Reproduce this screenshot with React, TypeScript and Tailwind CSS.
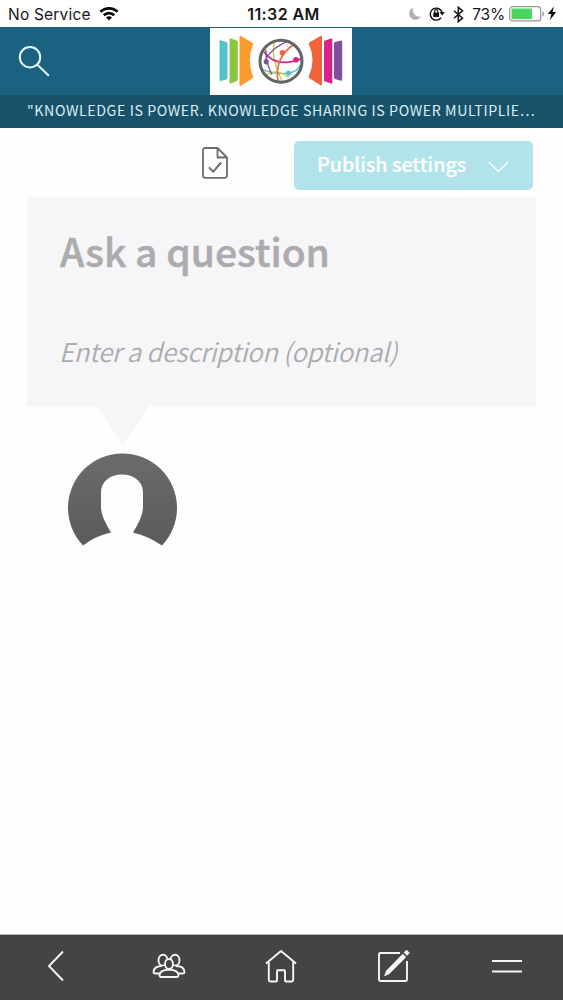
import type { ReactNode } from "react"

const sourceFont = "font-['Noto_Sans_CJK_SC','Noto_Sans',sans-serif]"

function StatusBar() {
  return (
    <div className="grid h-[27px] grid-cols-3 items-center bg-white pt-0.5 pr-[6px] pl-[8px] text-[15.5px] leading-none text-[#161616]">
      <div className="flex items-center gap-2 tracking-[0.2px] whitespace-nowrap">
        <span>No Service</span>
        <svg className="-mt-0.5" width="20" height="15" viewBox="0 0 20 15" fill="none" stroke="#080808" strokeWidth="2.7" aria-hidden>
          <path d="M1.4 5.8a12.3 12.3 0 0 1 17.2 0" />
          <path d="M4.8 9.3a7.4 7.4 0 0 1 10.4 0" />
          <path d="M7 11.6a4.2 4.2 0 0 1 6 0l-3 2.9Z" fill="#080808" stroke="none" />
        </svg>
      </div>
      <div className="-mt-0.5 ml-0.5 text-center text-[16px] font-semibold tracking-[0.4px] whitespace-nowrap">
        11:32 AM
      </div>
      <div className="flex items-center justify-end whitespace-nowrap">
        <svg className="-mt-0.5" width="14" height="14" viewBox="0 0 14 14" aria-hidden>
          <path d="M5 .8A6.3 6.3 0 1 0 13.2 9.3C9 10.8 4 7.5 5 .8Z" fill="#b0b0b3" />
        </svg>
        <svg className="-mt-0.5 ml-[7px]" width="16" height="15" viewBox="0 0 16 15" aria-hidden>
          <path d="M12.2 11.6A6 6 0 1 1 13 6.2" fill="none" stroke="#111" strokeWidth="1.4" />
          <path d="M10.6 6h5.2l-2.6 3.4Z" fill="#111" />
          <rect x="4.3" y="6.6" width="5.8" height="4.4" rx=".5" fill="#111" />
          <path d="M5.6 7V5.2a1.6 1.6 0 0 1 3.2 0V7" fill="none" stroke="#111" strokeWidth="1.1" />
        </svg>
        <svg className="-mt-px ml-2" width="11" height="17" viewBox="0 0 11 17" aria-hidden>
          <path d="m1 4.7 8.5 7.6-4.2 3.4V1.3l4.2 3.4L1 12.3" fill="none" stroke="#111" strokeWidth="1.5" />
        </svg>
        <span className="ml-2 tracking-[-0.2px]">73%</span>
        <svg className="-mt-0.5 ml-1" width="36" height="16" viewBox="0 0 36 16" aria-hidden>
          <rect x=".7" y=".7" width="31" height="14.2" rx="3" fill="none" stroke="#989898" strokeWidth="1.2" />
          <rect x="2.5" y="2.5" width="20.5" height="10.6" rx="1" fill="#49d660" />
          <path d="M33.4 5.3c2 .7 2 4.7 0 5.3Z" fill="#989898" />
        </svg>
        <svg className="-mt-0.5 ml-0.5" width="10" height="15" viewBox="0 0 10 15" aria-hidden>
          <path d="M6.9.6.8 8.1h3.6L2.7 14.2 9.2 6H5.5Z" fill="#080808" />
        </svg>
      </div>
    </div>
  )
}

function Logo() {
  return (
    <svg width="142" height="67" viewBox="0 0 142 67" aria-label="Knowledge network">
      <path d="M0 0h142v67H0z" fill="#fff" />
      <path d="M9.5 13q0-1 1-.8l6 1.7q1 .3 1 1.2v35q0 1-1 1.3l-6 1.5q-1 .2-1-.9Z" fill="#54c1cb" />
      <path d="M19.5 11.5q0-1.4 1.3-1l6 2q1 .4 1 1.5v37.5q0 1.2-1 1.6l-6 2.5q-1.3.5-1.3-1Z" fill="#8bc43f" />
      <path d="M29.5 8.8q0-1.6 1.4-.9L42 14.5q1.5 1 1 2.2-6.4 15.5 0 31.5.5 1.5-1 2.3l-11 7.2q-1.5.8-1.5-.9Z" fill="#f99b2d" />
      <path d="M112 8.8q0-1.6-1.4-.9l-10.6 6q-1.7 1-1.2 2.2 7.5 16 0 32.100-.5 1.500 1 2.300l10.700 6.800q1.500.8 1.500-.9Z" fill="#f1633b" />
      <path d="M122.300 11.500q0-1.400-1.300-1l-6 2q-1 .4-1 1.500v38q0 1.200 1 1.500l6 2q1.300.5 1.300-1Z" fill="#d9238b" />
      <path d="M124 15.400q0-1 1-1.300l6-1.600q1.200-.3 1.200 1v38.200q0 1.200-1.200 1l-6-1.800q-1-.3-1-1.300Z" fill="#80509c" />
      <g transform="translate(0 -.3)">
        <g fill="none" strokeWidth="1.3">
          <path d="M53 42q12 5 24 3.500T90 37" stroke="#54c1cb" />
          <path d="M64 15q-3 18 8 38M57 47q10-7 22 3" stroke="#bdcb43" />
          <path d="M54 24q12 17 38 7" stroke="#d9238b" strokeWidth="1.8" />
          <path d="M85 16q-21 13-17 38" stroke="#f1633b" strokeWidth="1.6" />
          <path d="M54 34q9-16 26-21M56 22q-1 11 6 25" stroke="#80509c" />
        </g>
        <circle cx="72.5" cy="25" r="2.8" fill="#f1633b" />
        <circle cx="86" cy="32" r="2.8" fill="#d9238b" />
        <circle cx="56.3" cy="34.3" r="2.5" fill="#80509c" />
        <circle cx="78.5" cy="45.5" r="2.6" fill="#54c1cb" />
        <circle cx="71" cy="33.5" r="21" fill="none" stroke="#626466" strokeWidth="3" />
      </g>
    </svg>
  )
}

function Header() {
  return (
    <header className="h-[101px] bg-[#1b6182] text-white">
      <div className="grid h-[68px] grid-cols-3 items-start">
        <button aria-label="Search" className="mt-[18px] ml-[18px] size-8">
          <svg width="32" height="32" viewBox="0 0 32 32" fill="none" stroke="#e9fbff" strokeWidth="2">
            <circle cx="12" cy="12.2" r="10.2" />
            <path d="m19.3 19.6 11.5 11.2" />
          </svg>
        </button>
        <div className="mt-px justify-self-center">
          <Logo />
        </div>
      </div>
      <p
        className={`h-[33px] bg-[#185269] pl-[27px] text-[14.2px] leading-[30px] tracking-[0.59px] whitespace-nowrap text-[#d9eef5] ${sourceFont}`}
      >
        "KNOWLEDGE IS POWER. KNOWLEDGE SHARING IS POWER MULTIPLIE…
      </p>
    </header>
  )
}

function Toolbar() {
  return (
    <div className="flex h-[69px] items-start justify-end pt-[13px] pr-[30px]">
      <svg className="mt-[6px] mr-[65px]" width="27" height="32" viewBox="0 0 27 32" fill="none" stroke="#6d6d6f" strokeWidth="1.8" strokeLinejoin="round" aria-hidden>
        <path d="M15.5 1H3.2A2.2 2.2 0 0 0 1 3.2v25.4a2.2 2.2 0 0 0 2.2 2.2h19.6a2.2 2.2 0 0 0 2.2-2.2V10.5L15.5 1v9.5H25" />
        <path d="m7 20.4 4.3 4.3 7.8-9.2" strokeWidth="2" />
      </svg>
      <button className="flex h-[49px] w-[239px] items-center justify-between rounded-[5px] bg-[#b1e4ea] pr-[24px] pl-[23px] text-white">
        <span
          className={`-mt-[3px] text-[19.7px] leading-none font-medium whitespace-nowrap [-webkit-text-stroke:0.2px] ${sourceFont}`}
        >
          Publish settings
        </span>
        <svg className="mt-0.5" width="21" height="12" viewBox="0 0 21 12" fill="none" stroke="white" strokeWidth="1.4" aria-hidden>
          <path d="m.7 1 9.8 9.6L20.3 1" />
        </svg>
      </button>
    </div>
  )
}

function QuestionForm() {
  return (
    <section className={`mx-[27px] h-[209px] bg-[#f6f5f8] px-[33px] text-[#acacae] ${sourceFont}`}>
      <h1 className="pt-[25px] text-[39px] leading-[56px] font-medium whitespace-nowrap [-webkit-text-stroke:0.5px]">
        Ask a question
      </h1>
      <p className="-ml-px pt-[53px] text-[25.8px] leading-[40px] font-[350] tracking-[-0.31px] whitespace-nowrap italic">
        Enter a description (optional)
      </p>
    </section>
  )
}

function Avatar() {
  return (
    <svg className="ml-[66px]" width="113" height="144" viewBox="0 0 113 144" aria-label="Your profile">
      <defs>
        <linearGradient id="avatar" x1="0" y1="0" x2="0" y2="1">
          <stop stopColor="#6b6b6c" />
          <stop offset="1" stopColor="#5b5b5d" />
        </linearGradient>
      </defs>
      <path d="M31 0h52L57 39Z" fill="#f6f6f9" />
      <path
        d="M17 139.5A54.5 54.5 0 1 1 96 139.5Q83 130.5 67 126.500Q77 110.500 77 101.500V86.500C77 75.500 68 68.500 56 68.500S35 75.500 35 86.500v15q0 9 10 25-17 4-28 13Z"
        fill="url(#avatar)"
      />
    </svg>
  )
}

function NavItem({ label, children }: { label: string; children: ReactNode }) {
  return (
    <button aria-label={label} className="flex items-center justify-center pb-[3px]">
      <svg width="36" height="36" viewBox="0 0 36 36" fill="none" stroke="#f5f5f5" strokeWidth="1.9" strokeLinejoin="round">
        {children}
      </svg>
    </button>
  )
}

function BottomNav() {
  return (
    <nav className="mt-auto grid h-[66px] grid-cols-5 border-t border-[#b5b5b5] bg-[#444345]">
      <NavItem label="Back">
        <path d="M25 3.5 11 18l14 14.5" />
      </NavItem>
      <NavItem label="People">
        <g fill="#444345">
          <ellipse cx="12" cy="12.2" rx="4.5" ry="5.5" />
          <ellipse cx="24" cy="12.2" rx="4.5" ry="5.5" />
          <path d="M11.5 18c-5 0-9 2-9 6.3 0 .8.5 1.2 1.3 1.2h28.4c.8 0 1.3-.4 1.3-1.2 0-4.3-4-6.3-9-6.3" />
          <ellipse cx="18" cy="16" rx="4" ry="5" />
          <path d="M8.5 27.5c0-4.5 4-5.7 9.5-5.7s9.5 1.2 9.5 5.7c0 .9-.5 1.5-1.5 1.5H10c-1 0-1.5-.6-1.5-1.5Z" />
        </g>
      </NavItem>
      <NavItem label="Home">
        <path d="M3 15.5 18 3l15 12.5M5.8 14v18q0 1.500 1.500 1.500H13q1 0 1-1V23q0-.7.7-.7h6.600q.7 0 .7.7v9.500q0 1 1 1h5.700q1.500 0 1.500-1.500V14" />
      </NavItem>
      <NavItem label="Compose">
        <g transform="translate(-1 0)">
          <path d="M25 5H5.500Q4 5 4 6.500v25Q4 33 5.500 33h25q1.500 0 1.500-1.500V13" />
          <path d="m9.500 28 1.700-5L27.700 6l3.200 3.200-16.500 16.500Z" fill="#f5f5f5" strokeWidth="0.500" />
          <path d="m29 4.500 2.500-2.500 3 3L32 7.500Z" fill="#f5f5f5" strokeWidth="0.500" />
        </g>
      </NavItem>
      <NavItem label="Menu">
        <path d="M3 13h30M3 23.500h30" strokeWidth="2" />
      </NavItem>
    </nav>
  )
}

export default function App() {
  return (
    <main className="flex h-screen min-h-[1000px] w-full flex-col overflow-hidden bg-[#fefefe] font-[Inter,sans-serif]">
      <StatusBar />
      <Header />
      <Toolbar />
      <QuestionForm />
      <Avatar />
      <BottomNav />
    </main>
  )
}
